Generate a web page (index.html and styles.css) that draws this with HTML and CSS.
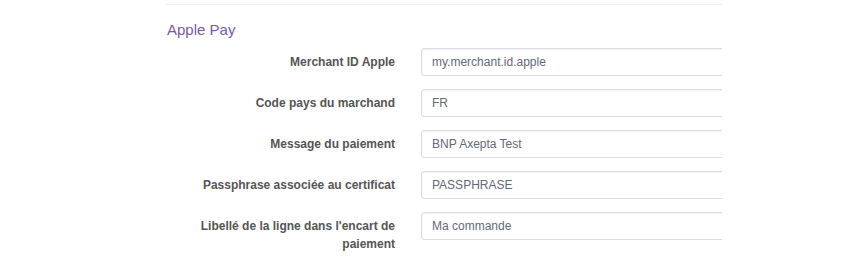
FILE: index.html
```html
<!DOCTYPE html>
<html lang="fr">
<head>
<meta charset="utf-8">
<link rel="stylesheet" href="styles.css">
</head>
<body>
<div class="panel">
  <h3 class="section-title">Apple Pay</h3>
  <div class="form-row">
    <label class="form-label">Merchant ID Apple</label>
    <div class="form-field"><input class="form-input" type="text" value="my.merchant.id.apple"></div>
  </div>
  <div class="form-row">
    <label class="form-label">Code pays du marchand</label>
    <div class="form-field"><input class="form-input" type="text" value="FR"></div>
  </div>
  <div class="form-row">
    <label class="form-label">Message du paiement</label>
    <div class="form-field"><input class="form-input" type="text" value="BNP Axepta Test"></div>
  </div>
  <div class="form-row">
    <label class="form-label">Passphrase associée au certificat</label>
    <div class="form-field"><input class="form-input" type="text" value="PASSPHRASE"></div>
  </div>
  <div class="form-row">
    <label class="form-label">Libellé de la ligne dans l'encart de paiement</label>
    <div class="form-field"><input class="form-input" type="text" value="Ma commande"></div>
  </div>
</div>
</body>
</html>
```

FILE: styles.css
```css
html, body {
  margin: 0;
  padding: 0;
  background: #ffffff;
}

body {
  font-family: "Liberation Sans", Arial, sans-serif;
  padding-top: 4px;
}

.panel {
  margin-left: 166px;
  width: 556px;
  overflow: hidden;
  border-top: 1px solid #eeeeee;
}

.section-title {
  margin: 16px 0 0 1px;
  font-size: 15px;
  font-weight: normal;
  line-height: 18px;
  color: #7a5aa6;
}

.form-row {
  display: grid;
  grid-template-columns: 229px 1fr;
  column-gap: 26px;
  margin-top: 9px;
  margin-bottom: 4px;
}

.form-row + .form-row {
  margin-top: 13px;
}

.form-label {
  text-align: right;
  font-weight: bold;
  font-size: 12px;
  line-height: 18px;
  color: #555555;
  padding-top: 5px;
}

.form-field {
  min-width: 0;
}

.form-input {
  display: block;
  box-sizing: border-box;
  width: 420px;
  height: 28px;
  margin: 0;
  padding: 0 10px;
  border: 1px solid #dcdde3;
  border-radius: 3px;
  box-shadow: inset 0 1px 2px rgba(0, 0, 0, 0.06);
  font-family: "Liberation Sans", Arial, sans-serif;
  font-size: 12px;
  color: #5f6a7a;
  background: #ffffff;
  outline: none;
}
```
